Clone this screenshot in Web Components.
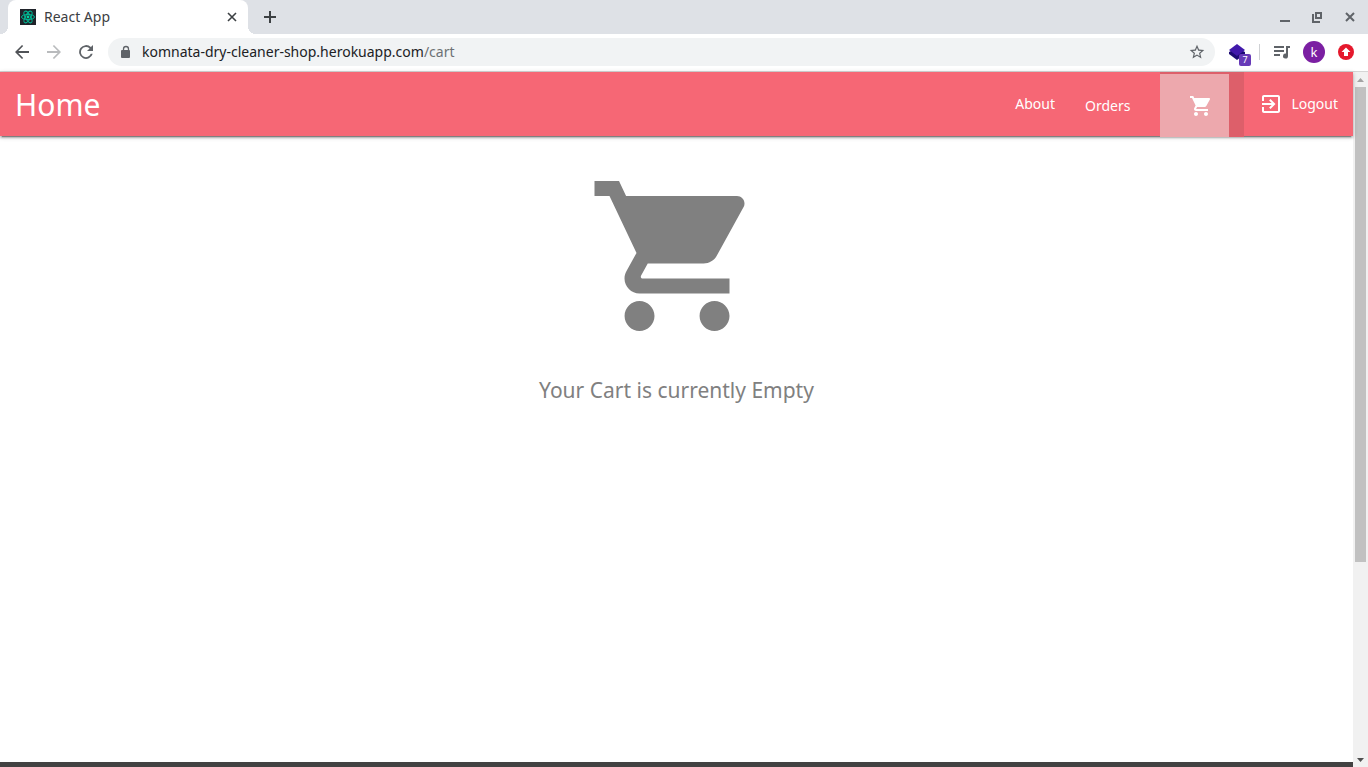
<!DOCTYPE html>
<html lang="en">
<head>
<meta charset="utf-8">
<title>React App</title>
<style>
  html, body { margin: 0; height: 100%; }
  body { overflow: hidden; background: #fff; font-family: "Noto Sans", sans-serif; }
</style>
</head>
<body>
<browser-window>
  <browser-tabs slot="tabs"></browser-tabs>
  <browser-toolbar slot="toolbar"></browser-toolbar>
  <shop-navbar></shop-navbar>
  <empty-cart>Your Cart is currently Empty</empty-cart>
  <shop-footer></shop-footer>
  <scroll-track slot="scroll"></scroll-track>
</browser-window>

<script>
const cartPath = "M7 18c-1.1 0-1.99.9-1.99 2S5.9 22 7 22s2-.9 2-2-.9-2-2-2zM1 2v2h2l3.6 7.59-1.35 2.45c-.16.28-.25.61-.25.96 0 1.1.9 2 2 2h12v-2H7.42c-.14 0-.25-.11-.25-.25l.03-.12.9-1.63h7.45c.75 0 1.41-.41 1.75-1.03l3.58-6.49c.08-.14.12-.31.12-.48 0-.55-.45-1-1-1H5.21l-.94-2H1zm16 16c-1.1 0-1.99.9-1.99 2s.89 2 1.99 2 2-.9 2-2-.9-2-2-2z";

function define(name, markup) {
  customElements.define(name, class extends HTMLElement {
    constructor() {
      super();
      this.attachShadow({ mode: "open" }).innerHTML = markup;
    }
  });
}

define("browser-window", `
<style>
  :host { display: flex; flex-direction: column; height: 100vh; }
  .view { flex: 1; min-height: 0; display: flex; }
  main { flex: 1; min-width: 0; display: flex; flex-direction: column; }
</style>
<slot name="tabs"></slot>
<slot name="toolbar"></slot>
<div class="view"><main><slot></slot></main><slot name="scroll"></slot></div>`);

define("browser-tabs", `
<style>
  :host { display: flex; height: 34px; background: #dee1e6; color: #3c4043; }
  button { border: 0; background: none; padding: 0; display: grid; place-items: center; color: inherit; }
  svg { display: block; }
  .tab { position: relative; box-sizing: border-box; width: 240px; margin-left: 8px; padding: 0 8px 0 12px; display: flex; align-items: center; gap: 8px; background: #fff; border-radius: 8px 8px 0 0; }
  .tab::before, .tab::after { content: ""; position: absolute; bottom: 0; width: 8px; height: 8px; }
  .tab::before { left: -8px; background: radial-gradient(circle at 0 0, transparent 8px, #fff 8px); }
  .tab::after { right: -8px; background: radial-gradient(circle at 100% 0, transparent 8px, #fff 8px); }
  .title { flex: 1; font-size: 14px; line-height: 20px; }
  .close { width: 16px; height: 16px; }
  .new { width: 28px; margin-left: 8px; }
  .controls { margin-left: auto; padding-right: 10px; display: flex; gap: 16px; color: #5f6368; }
  .controls button { width: 16px; }
</style>
<div class="tab">
  <svg width="16" height="16" viewBox="0 0 16 16"><rect width="16" height="16" fill="#20232a"/><g fill="none" stroke="#00b894"><ellipse cx="8" cy="8" rx="6.5" ry="2.6"/><ellipse cx="8" cy="8" rx="6.5" ry="2.6" transform="rotate(60 8 8)"/><ellipse cx="8" cy="8" rx="6.5" ry="2.6" transform="rotate(120 8 8)"/></g><circle cx="8" cy="8" r="1.4" fill="#00d8a0"/></svg>
  <span class="title">React App</span>
  <button class="close" aria-label="Close tab"><svg width="16" height="16"><path d="M4 4l8 8M12 4l-8 8" stroke="currentColor" stroke-width="1.6"/></svg></button>
</div>
<button class="new" aria-label="New tab"><svg width="14" height="14"><path d="M7 1v12M1 7h12" stroke="currentColor" stroke-width="2"/></svg></button>
<div class="controls">
  <button aria-label="Minimize"><svg width="16" height="16"><path d="M2 12h10" stroke="currentColor" stroke-width="2"/></svg></button>
  <button aria-label="Restore"><svg width="16" height="16" fill="none" stroke="currentColor"><path d="M6 4h5v5H6z" stroke-width="2"/><path d="M3 5v8h7" stroke-width="2"/></svg></button>
  <button aria-label="Close"><svg width="16" height="16"><path d="M4 4l8 8M12 4l-8 8" stroke="currentColor" stroke-width="2"/></svg></button>
</div>`);

define("browser-toolbar", `
<style>
  :host { box-sizing: border-box; display: flex; align-items: center; height: 38px; padding: 0 14px 1px; background: #fff; border-bottom: 1px solid #d5d5d5; color: #5f6368; }
  button { border: 0; background: none; padding: 0; display: block; color: inherit; font-family: inherit; }
  svg { display: block; fill: currentColor; }
  .history { display: flex; gap: 16px; }
  .back { color: #505357; }
  .forward { color: #b9bbbd; }
  .address { flex: 1; box-sizing: border-box; height: 28px; margin-left: 14px; padding: 0 10px 0 12px; border-radius: 14px; background: #f1f3f4; display: flex; align-items: center; }
  a { flex: 1; margin-left: 10px; font-size: 14px; line-height: 20px; color: #202124; text-decoration: none; }
  a span { color: #6d7175; }
  .ext { position: relative; margin-left: 14px; }
  .badge { position: absolute; left: 10px; top: 10px; width: 12px; height: 12px; border-radius: 2px; background: #673ab7; color: #fff; font-size: 9px; line-height: 12px; text-align: center; }
  .rule { width: 1px; height: 16px; margin: 0 14px; background: #cfd1d4; }
  .avatar { width: 22px; height: 22px; margin: 0 13px; border-radius: 50%; background: #7b1fa2; color: #fff; font-size: 13px; line-height: 22px; text-align: center; }
</style>
<div class="history">
  <button class="back" aria-label="Back"><svg width="16" height="16"><path d="M15 7H4.3l4.9-4.9L8 1 1 8l7 7 1.2-1.1L4.3 9H15z"/></svg></button>
  <button class="forward" aria-label="Forward"><svg width="16" height="16"><path d="M1 7h10.700l-4.900-4.900L8 1l7 7-7 7-1.200-1.100L11.700 9H1z"/></svg></button>
  <button aria-label="Reload"><svg width="16" height="16"><path d="M12.900 3.100A6.900 6.900 0 1 0 14.700 9.800h-1.900A5.100 5.100 0 1 1 11.600 4.400L9 7h6V1z"/></svg></button>
</div>
<div class="address">
  <svg width="12" height="14"><path d="M3.500 6V4a2.500 2.500 0 0 1 5 0v2" fill="none" stroke="currentColor" stroke-width="1.300"/><rect x="1" y="5" width="9" height="8" rx="1"/></svg>
  <a href="#cart">komnata-dry-cleaner-shop.herokuapp.com<span>/cart</span></a>
  <button aria-label="Bookmark"><svg width="16" height="16" viewBox="1 1 22 22"><path d="M22 9.240l-7.190-.62L12 2 9.190 8.630 2 9.240l5.460 4.730L5.820 21 12 17.270 18.180 21l-1.630-7.030L22 9.240zM12 15.400l-3.760 2.270 1-4.280-3.320-2.880 4.380-.38L12 6.100l1.710 4.040 4.380.38-3.320 2.880 1 4.280L12 15.400z"/></svg></button>
</div>
<button class="ext" aria-label="Extension"><svg width="16" height="16"><path d="M0 8l8-4 8 4v2l-8 6-8-6z" fill="#1d0b74"/><path d="M8 0l8 6-8 6-8-6z" fill="#4119ab"/></svg><span class="badge">7</span></button>
<span class="rule"></span>
<button aria-label="Media"><svg width="16" height="16"><path d="M0 2h10v2H0zM0 6h10v2H0zM0 10h6v2H0zM12 2h4v2h-2v8a2.500 2.500 0 1 1-2-2.400z"/></svg></button>
<button class="avatar" aria-label="Profile">k</button>
<button aria-label="Updates"><svg width="16" height="16"><circle cx="8" cy="8" r="8" fill="#e5182c"/><path d="M8 3.500l4.500 4.500H10v4H6V8H3.500z" fill="#fff"/></svg></button>`);

define("shop-navbar", `
<style>
  :host { position: relative; display: block; background: #f66775; color: #fff; box-shadow: 0 2px 2px rgba(0,0,0,.2), 0 1px 5px rgba(0,0,0,.2), 0 3px 1px -2px rgba(0,0,0,.3); }
  nav { display: flex; justify-content: space-between; height: 64px; line-height: 64px; }
  a { color: inherit; text-decoration: none; }
  svg { display: block; fill: currentColor; }
  .brand { padding-left: 15px; font-size: 30px; line-height: 66px; }
  ul { display: flex; margin: 0; padding: 0; list-style: none; font-size: 14px; }
  li a { display: flex; align-items: center; height: 64px; padding: 0 15px; }
  .orders { padding-top: 2px; }
  .cart { margin-left: 15px; padding-right: 15px; height: 65px; background: #dd5f6a; }
  .cart a { margin-top: 2px; box-sizing: border-box; height: 63px; width: 69px; padding: 0 0 0 29px; background: #eda8ad; }
  .logout { gap: 8px; }
</style>
<nav>
  <a class="brand" href="#home">Home</a>
  <ul>
    <li><a href="#about">About</a></li>
    <li class="orders"><a href="#orders">Orders</a></li>
    <li class="cart"><a href="#cart" aria-label="Cart"><svg width="24" height="24" viewBox="0 0 24 24"><path d="${cartPath}"/></svg></a></li>
    <li><a class="logout" href="#logout"><svg width="24" height="24" viewBox="0 0 24 24"><path d="M10.090 15.590L11.500 17l5-5-5-5-1.410 1.410L12.670 11H3v2h9.670l-2.580 2.590zM19 3H5c-1.110 0-2 .9-2 2v4h2V5h14v14H5v-4H3v4c0 1.100.89 2 2 2h14c1.100 0 2-.9 2-2V5c0-1.100-.9-2-2-2z"/></svg>Logout</a></li>
  </ul>
</nav>`);

define("empty-cart", `
<style>
  :host { flex: 1; display: flex; flex-direction: column; align-items: center; padding-top: 30px; color: gray; }
  svg { display: block; fill: currentColor; }
  p { margin: 28px 0 0; font-size: 21px; line-height: 32px; }
</style>
<svg width="180" height="180" viewBox="0 0 24 24" aria-hidden="true"><path d="${cartPath}"/></svg>
<p><slot></slot></p>`);

define("shop-footer", `<style>:host { display: block; height: 5px; background: #424242; }</style>`);

define("scroll-track", `
<style>
  :host { display: flex; flex-direction: column; width: 15px; background: #f1f1f1; }
  svg { display: block; }
  .rail { flex: 1; padding: 0 2px; display: grid; grid-template-rows: 475fr 190fr; }
  .thumb { background: #c1c1c1; }
</style>
<svg width="15" height="15"><path d="M4 10h7L7.500 6z" fill="#a3a3a3"/></svg>
<div class="rail"><div class="thumb"></div></div>
<svg width="15" height="15"><path d="M4 6h7l-3.500 4z" fill="#505050"/></svg>`);
</script>
</body>
</html>
